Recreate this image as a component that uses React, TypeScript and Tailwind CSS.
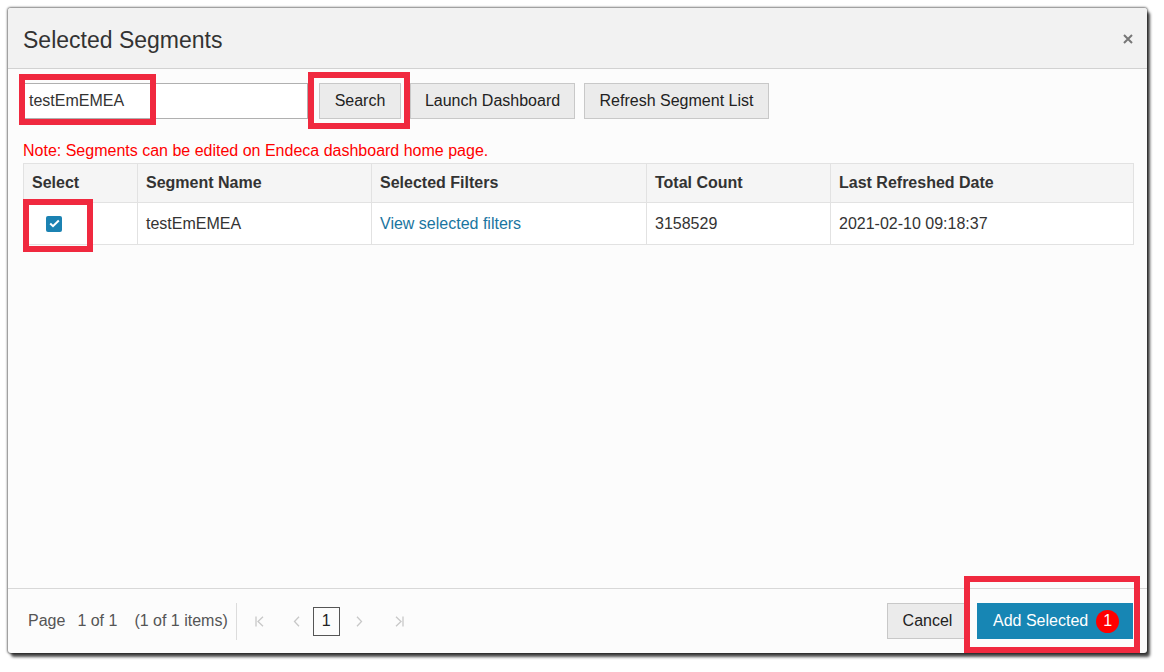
import React from "react";

const font = { fontFamily: '"Liberation Sans", Arial, sans-serif' };

function FirstIcon() {
  return (
    <svg width="9" height="11" viewBox="0 0 9 11" fill="none" stroke="#c8c8c8" strokeWidth="1.3">
      <path d="M1 0.5 V10.5" />
      <path d="M8 0.8 L3 5.5 L8 10.2" />
    </svg>
  );
}
function LastIcon() {
  return (
    <svg width="9" height="11" viewBox="0 0 9 11" fill="none" stroke="#c8c8c8" strokeWidth="1.3">
      <path d="M8 0.5 V10.5" />
      <path d="M1 0.8 L6 5.5 L1 10.2" />
    </svg>
  );
}
function PrevIcon() {
  return (
    <svg width="7" height="11" viewBox="0 0 7 11" fill="none" stroke="#c8c8c8" strokeWidth="1.3">
      <path d="M6 0.8 L1.5 5.5 L6 10.2" />
    </svg>
  );
}
function NextIcon() {
  return (
    <svg width="7" height="11" viewBox="0 0 7 11" fill="none" stroke="#c8c8c8" strokeWidth="1.3">
      <path d="M1 0.8 L5.5 5.5 L1 10.2" />
    </svg>
  );
}

export default function App() {
  const th = "border border-[#e2e2e2] px-[8px] text-left font-bold text-[16px] text-[#333] h-[39px]";
  const td = "border border-[#e2e2e2] px-[8px] text-[16px] text-[#333] h-[42px]";
  return (
    <div className="w-[1164px] h-[672px] bg-white overflow-hidden pt-[8px] pl-[8px]" style={font}>
      <div className="relative w-[1139px] h-[645px] flex flex-col bg-[#fcfcfc] rounded-[3px] shadow-[0_0_2px_1px_rgba(0,0,0,0.5),3px_4px_3px_rgba(0,0,0,0.7)]">
        {/* header */}
        <div className="h-[61px] shrink-0 flex items-center justify-between pl-[15px] pr-[14px] bg-[#f2f2f2] border-b border-[#d2d2d2] rounded-t-[3px]">
          <div className="text-[23px] text-[#333] leading-none pt-[4px]">Selected Segments</div>
          <svg width="10" height="10" viewBox="0 0 10 10" stroke="#777" strokeWidth="2" className="mt-[2px]">
            <path d="M1 1 L9 9 M9 1 L1 9" />
          </svg>
        </div>

        {/* body */}
        <div className="flex-1 px-[15px] pt-[14px]">
          <div className="flex items-center">
            <div className="w-[285px] h-[36px] border border-[#b0b0b0] bg-white flex items-center pl-[5px] text-[16px] text-[#333]">
              testEmEMEA
            </div>
            <button className="ml-[11px] w-[82px] h-[36px] bg-[#ebebeb] border border-[#c8c8c8] text-[16px] text-[#222]">
              Search
            </button>
            <button className="ml-[9px] w-[165px] h-[36px] bg-[#ebebeb] border border-[#c8c8c8] text-[16px] text-[#222]">
              Launch Dashboard
            </button>
            <button className="ml-[9px] w-[185px] h-[36px] bg-[#ebebeb] border border-[#c8c8c8] text-[16px] text-[#222]">
              Refresh Segment List
            </button>
          </div>
          <div className="mt-[22px] h-[20px] leading-[20px] text-[16px] text-[#ff0000]">
            Note: Segments can be edited on Endeca dashboard home page.
          </div>
          <table className="mt-[2px] w-[1110px] border-collapse table-fixed">
            <colgroup>
              <col className="w-[114px]" />
              <col className="w-[234px]" />
              <col className="w-[275px]" />
              <col className="w-[184px]" />
              <col className="w-[303px]" />
            </colgroup>
            <thead>
              <tr className="bg-[#f5f5f5]">
                <th className={th}>Select</th>
                <th className={th}>Segment Name</th>
                <th className={th}>Selected Filters</th>
                <th className={th}>Total Count</th>
                <th className={th}>Last Refreshed Date</th>
              </tr>
            </thead>
            <tbody>
              <tr className="bg-white">
                <td className={td}>
                  <div className="ml-[14px] w-[16px] h-[16px] rounded-[2px] bg-[#1b82b2] flex items-center justify-center">
                    <svg width="11" height="9" viewBox="0 0 11 9" fill="none" stroke="white" strokeWidth="2">
                      <path d="M1.2 4.5 L4 7.2 L9.8 1.5" />
                    </svg>
                  </div>
                </td>
                <td className={td}>testEmEMEA</td>
                <td className={td + " !text-[#1a75a0]"}>View selected filters</td>
                <td className={td}>3158529</td>
                <td className={td}>2021-02-10 09:18:37</td>
              </tr>
            </tbody>
          </table>
        </div>

        {/* footer */}
        <div className="h-[65px] shrink-0 border-t border-[#d8d8d8] flex items-center justify-between pl-[20px] pr-[14px]">
          <div className="flex items-center text-[16px] text-[#555]">
            <span>Page</span>
            <span className="ml-[12px]">1 of 1</span>
            <span className="ml-[17px]">(1 of 1 items)</span>
            <div className="ml-[8px] w-px h-[37px] bg-[#dcdcdc]" />
            <div className="ml-[18px] flex items-center"><FirstIcon /></div>
            <div className="ml-[29px] flex items-center"><PrevIcon /></div>
            <div className="ml-[13px] w-[27px] h-[29px] border border-[#555] flex items-center justify-center text-[#222]">1</div>
            <div className="ml-[16px] flex items-center"><NextIcon /></div>
            <div className="ml-[32px] flex items-center"><LastIcon /></div>
          </div>
          <div className="flex items-center">
            <button className="w-[81px] h-[36px] bg-[#ebebeb] border border-[#c8c8c8] text-[16px] text-[#222]">
              Cancel
            </button>
            <button className="ml-[9px] w-[156px] h-[36px] bg-[#1786b4] text-white text-[16px] flex items-center pl-[16px]">
              <span>Add Selected</span>
              <span className="ml-[8px] w-[23px] h-[23px] rounded-full bg-[#ff0000] flex items-center justify-center text-[16px]">1</span>
            </button>
          </div>
        </div>

        {/* highlight overlays */}
        <div className="absolute left-[11px] top-[66px] w-[137px] h-[51px] border-[6px] border-[#f0293f] pointer-events-none" />
        <div className="absolute left-[300px] top-[64px] w-[102px] h-[57px] border-[6px] border-[#f0293f] pointer-events-none" />
        <div className="absolute left-[15px] top-[191px] w-[70px] h-[53px] border-[6px] border-[#f0293f] pointer-events-none" />
        <div className="absolute left-[956px] top-[568px] w-[176px] h-[77px] border-[6px] border-[#f0293f] pointer-events-none" />
      </div>
    </div>
  );
}
